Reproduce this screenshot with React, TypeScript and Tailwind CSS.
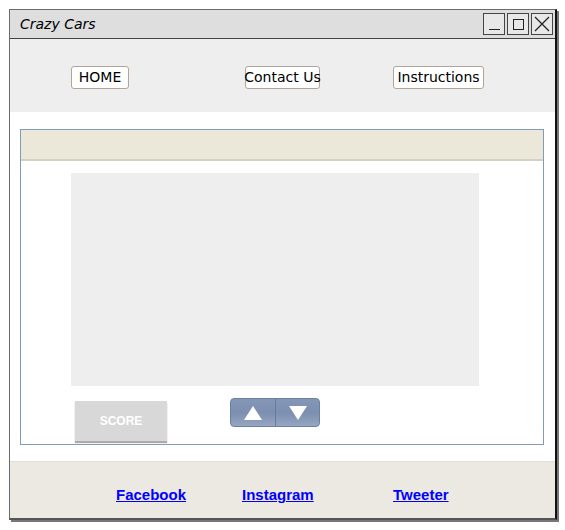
import React from "react";

const font = { fontFamily: '"DejaVu Sans", "Comic Sans MS", sans-serif' };
const linkFont = { fontFamily: '"Liberation Sans", Arial, sans-serif' };

function NavBtn({ label, w, ml }: { label: string; w: string; ml: string }) {
  return (
    <div
      className={`${w} ${ml} h-[23px] flex items-center justify-center bg-white border border-[#b0a598] rounded-[3px] text-[14px] text-black whitespace-nowrap`}
      style={font}
    >
      {label}
    </div>
  );
}

export default function App() {
  return (
    <div className="w-[565px] h-[530px] bg-white pt-[9px] pl-[9px]">
      <div className="w-[548px] h-[511px] flex flex-col border-l border-t border-[#6b6b6b] border-r-2 border-r-[#111] border-b-2 border-b-[#555] shadow-[2px_2px_0_#777]">
        {/* Title bar */}
        <div className="h-[29px] shrink-0 flex items-center justify-between bg-[#dedede] border-b border-[#444] pl-[10px] pr-[2px]">
          <span className="text-[14px] italic text-black" style={font}>
            Crazy Cars
          </span>
          <div className="flex gap-[2px]">
            <div className="w-[22px] h-[22px] border border-[#444] bg-[#e8e8e8] flex items-end justify-center pb-[4px]">
              <div className="w-[11px] h-[1.5px] bg-[#222]" />
            </div>
            <div className="w-[22px] h-[22px] border border-[#444] bg-[#e8e8e8] flex items-center justify-center">
              <div className="w-[11px] h-[11px] border-[1.5px] border-[#222]" />
            </div>
            <div className="w-[22px] h-[22px] border border-[#444] bg-[#e8e8e8] flex items-center justify-center">
              <svg width="16" height="16" viewBox="0 0 16 16">
                <path d="M1 1 L15 15 M15 1 L1 15" stroke="#222" strokeWidth="1.3" />
              </svg>
            </div>
          </div>
        </div>
        {/* Nav */}
        <div className="h-[73px] shrink-0 bg-[#eeeeee] flex items-center pl-[61px] pt-[4px]">
          <NavBtn label="HOME" w="w-[58px]" ml="ml-0" />
          <NavBtn label="Contact Us" w="w-[75px]" ml="ml-[116px]" />
          <NavBtn label="Instructions" w="w-[91px]" ml="ml-[73px]" />
        </div>
        {/* Content */}
        <div className="h-[349px] shrink-0 bg-white pt-[17px] pl-[10px]">
          <div className="w-[524px] h-[316px] border border-[#7f9db9] flex flex-col">
            <div className="h-[31px] shrink-0 bg-[#ebe8da] border-b-2 border-[#d4d0c4]" />
            <div className="flex flex-col pl-[50px] pt-[12px]">
              <div className="w-[408px] h-[213px] bg-[#eeeeee]" />
              <div className="flex items-start mt-[12px]">
                <div className="w-[92px] h-[40px] mt-[3px] ml-[4px] bg-[#d8d8d8] shadow-[0_2px_1px_#aaa] flex items-center justify-center text-[12px] font-bold text-white" style={linkFont}>
                  SCORE
                </div>
                <div className="ml-[63px] w-[90px] h-[29px] rounded-[4px] border border-[#6d7f9e] bg-gradient-to-b from-[#8597b7] via-[#7c8fb0] to-[#95a6c2] flex">
                  <div className="w-[45px] h-full flex items-center justify-center border-r border-[#6a7b98]">
                    <svg width="18" height="14" viewBox="0 0 18 14">
                      <path d="M9 0 L18 14 L0 14 Z" fill="white" />
                    </svg>
                  </div>
                  <div className="flex-1 h-full flex items-center justify-center">
                    <svg width="18" height="14" viewBox="0 0 18 14">
                      <path d="M0 0 L18 0 L9 14 Z" fill="white" />
                    </svg>
                  </div>
                </div>
              </div>
            </div>
          </div>
        </div>
        {/* Footer */}
        <div className="flex-1 bg-[#ece9e3] flex items-center pl-[106px] pt-[9px] border-t border-[#e2ded6]">
          <div className="w-[126px] shrink-0">
            <a href="#" className="text-[15px] font-bold text-[#0000ff] underline" style={linkFont}>Facebook</a>
          </div>
          <div className="w-[151px] shrink-0">
            <a href="#" className="text-[15px] font-bold text-[#0000ff] underline" style={linkFont}>Instagram</a>
          </div>
          <div>
            <a href="#" className="text-[15px] font-bold text-[#0000ff] underline" style={linkFont}>Tweeter</a>
          </div>
        </div>
      </div>
    </div>
  );
}
